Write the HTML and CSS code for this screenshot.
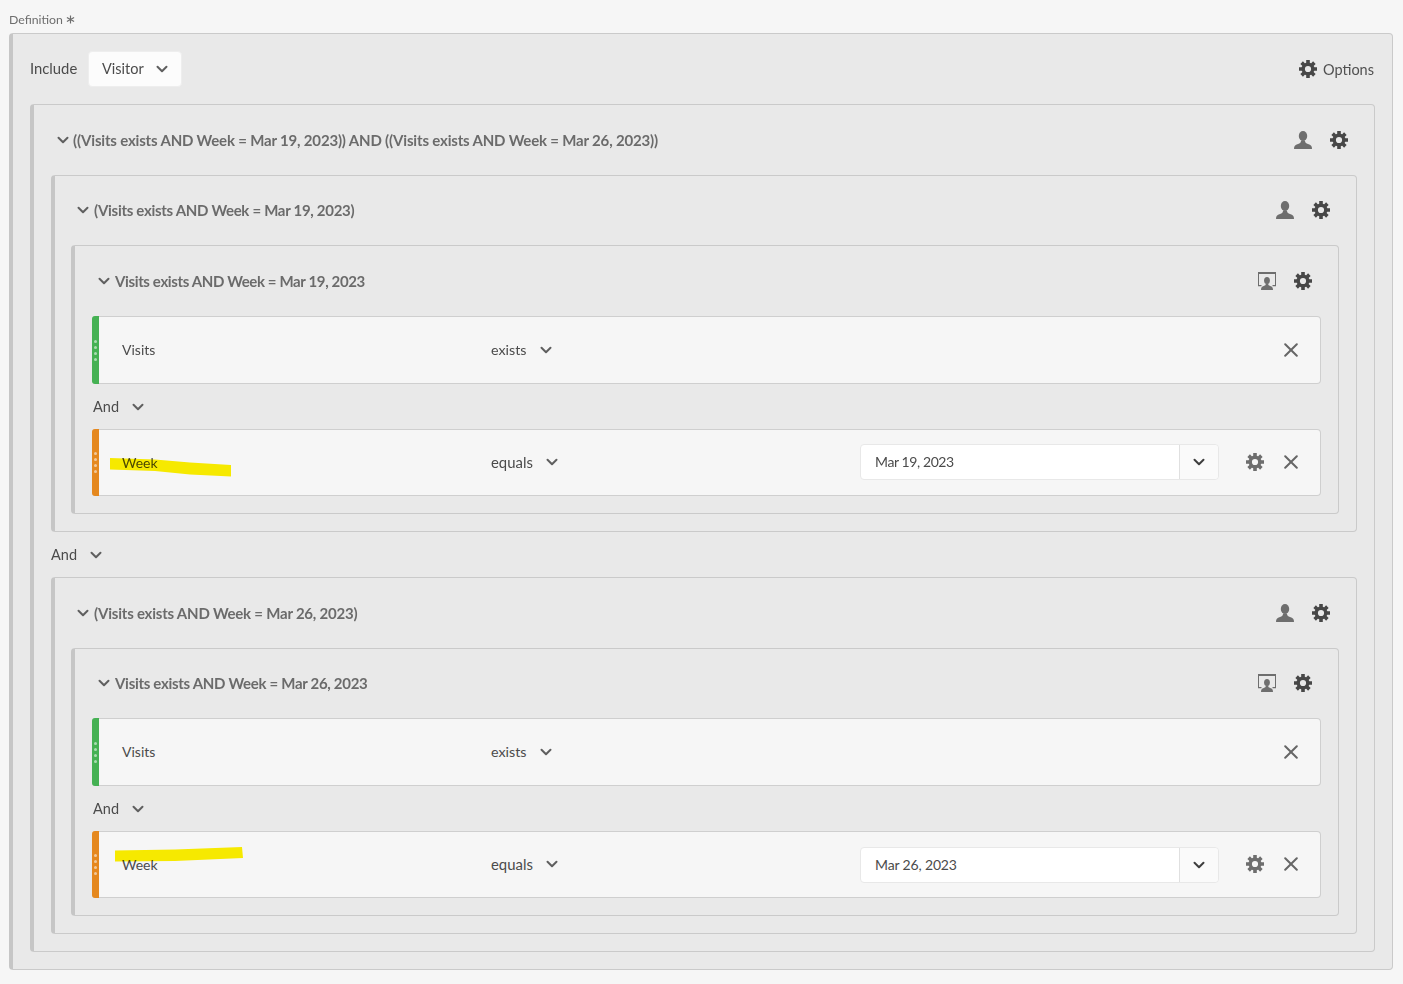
FILE: index.html
```html
<!DOCTYPE html>
<html lang="en">
<head>
<meta charset="utf-8">
<title>Definition</title>
<link rel="stylesheet" href="styles.css">
</head>
<body>
<svg class="defs" width="0" height="0" aria-hidden="true">
  <symbol id="gear" viewBox="0 0 18 18">
    <circle cx="9" cy="9" r="4.800" fill="none" stroke="currentColor" stroke-width="3.400"/>
    <g fill="currentColor">
      <path d="M7.200 0h3.600v4H7.200zM7.200 14h3.600v4H7.200z"/>
      <path d="M7.200 0h3.600v4H7.200zM7.200 14h3.600v4H7.200z" transform="rotate(45 9 9)"/>
      <path d="M7.200 0h3.600v4H7.200zM7.200 14h3.600v4H7.200z" transform="rotate(90 9 9)"/>
      <path d="M7.200 0h3.600v4H7.200zM7.200 14h3.600v4H7.200z" transform="rotate(135 9 9)"/>
    </g>
  </symbol>
  <symbol id="person" viewBox="0 0 18 18">
    <ellipse cx="9" cy="5" rx="4.200" ry="5"/>
    <path d="M0 18c0-3 1-4 4-5 2-.7 3-1.300 3-3.500h4c0 2.200 1 2.800 3 3.500 3 1 4 2 4 5z"/>
  </symbol>
  <symbol id="screen" viewBox="0 0 18 18">
    <path d="M0 0h18v2H0zM0 2h1v11h2.500v1.200H0zM17 2h1v12.200h-3.500V13H17z"/>
    <ellipse cx="9" cy="8.500" rx="2.900" ry="3.600"/>
    <path d="M3 18c0-2.500.8-3.200 2.800-4 1.400-.5 2-1 2-2.500h2.400c0 1.500.6 2 2 2.500 2 .8 2.800 1.500 2.800 4z"/>
  </symbol>
  <symbol id="chev" viewBox="0 0 12 8">
    <path d="M1.500 1.700 6 6.200l4.500-4.500" fill="none" stroke="currentColor" stroke-width="2" stroke-linecap="round" stroke-linejoin="round"/>
  </symbol>
  <symbol id="cross" viewBox="0 0 14 14">
    <path d="M1.200 1.200l11.600 11.600M12.800 1.200 1.200 12.800" fill="none" stroke="currentColor" stroke-width="2" stroke-linecap="round"/>
  </symbol>
  <symbol id="star" viewBox="0 0 10 10">
    <path d="M5 .5v9M1 2.700l8 4.600M9 2.700 1 7.300" fill="none" stroke="currentColor" stroke-width="1.300"/>
  </symbol>
</svg>

<main class="page">
  <div class="field-label">Definition <svg class="star"><use href="#star"/></svg></div>
  <section class="box box-outer">
    <header class="top-row">
      <span class="include">Include</span>
      <button class="picker"><span class="picker-text">Visitor</span><svg class="chev chev-sm"><use href="#chev"/></svg></button>
      <span class="options"><svg class="gear gear-dark"><use href="#gear"/></svg>Options</span>
    </header>

    <section class="box box-l1">
      <header class="head">
        <svg class="chev head-chev"><use href="#chev"/></svg>
        <span class="title">((Visits exists AND Week = Mar 19, 2023)) AND ((Visits exists AND Week = Mar 26, 2023))</span>
        <span class="tools"><svg class="ico-person"><use href="#person"/></svg><svg class="gear gear-dark"><use href="#gear"/></svg></span>
      </header>

      <section class="box box-l2">
        <header class="head head-short">
          <svg class="chev head-chev"><use href="#chev"/></svg>
          <span class="title">(Visits exists AND Week = Mar 19, 2023)</span>
          <span class="tools"><svg class="ico-person"><use href="#person"/></svg><svg class="gear gear-dark"><use href="#gear"/></svg></span>
        </header>
        <section class="box box-l3">
          <header class="head">
            <svg class="chev head-chev"><use href="#chev"/></svg>
            <span class="title">Visits exists AND Week = Mar 19, 2023</span>
            <span class="tools"><svg class="ico-person"><use href="#screen"/></svg><svg class="gear gear-dark"><use href="#gear"/></svg></span>
          </header>
          <div class="rule rule-green">
            <span class="grip"><i></i><i></i><i></i><i></i></span>
            <span class="rule-name">Visits</span>
            <span class="rule-op">exists<svg class="chev chev-sm"><use href="#chev"/></svg></span>
            <span class="rule-end"><svg class="cross"><use href="#cross"/></svg></span>
          </div>
          <div class="andor andor-inner">And<svg class="chev chev-sm"><use href="#chev"/></svg></div>
          <div class="rule rule-orange">
            <span class="grip"><i></i><i></i><i></i><i></i></span>
            <span class="rule-name">Week</span>
            <span class="rule-op">equals<svg class="chev chev-sm"><use href="#chev"/></svg></span>
            <span class="combo"><span class="combo-val">Mar 19, 2023</span><span class="combo-btn"><svg class="chev chev-sm chev-dark"><use href="#chev"/></svg></span></span>
            <span class="rule-end"><svg class="gear gear-mid"><use href="#gear"/></svg><svg class="cross"><use href="#cross"/></svg></span>
            <svg class="mark mark-a" viewBox="0 0 122 19"><path d="M0 0 45 1.500 80 4.500 121 7 121 18.500 80 16.500 45 13 0 11.500z"/></svg>
          </div>
        </section>
      </section>

      <div class="andor andor-outer">And<svg class="chev chev-sm"><use href="#chev"/></svg></div>

      <section class="box box-l2">
        <header class="head">
          <svg class="chev head-chev"><use href="#chev"/></svg>
          <span class="title title-wide">(Visits exists AND Week = Mar 26, 2023)</span>
          <span class="tools"><svg class="ico-person"><use href="#person"/></svg><svg class="gear gear-dark"><use href="#gear"/></svg></span>
        </header>
        <section class="box box-l3">
          <header class="head head-short">
            <svg class="chev head-chev"><use href="#chev"/></svg>
            <span class="title title-wide">Visits exists AND Week = Mar 26, 2023</span>
            <span class="tools"><svg class="ico-person"><use href="#screen"/></svg><svg class="gear gear-dark"><use href="#gear"/></svg></span>
          </header>
          <div class="rule rule-green">
            <span class="grip"><i></i><i></i><i></i><i></i></span>
            <span class="rule-name">Visits</span>
            <span class="rule-op">exists<svg class="chev chev-sm"><use href="#chev"/></svg></span>
            <span class="rule-end"><svg class="cross"><use href="#cross"/></svg></span>
          </div>
          <div class="andor andor-inner">And<svg class="chev chev-sm"><use href="#chev"/></svg></div>
          <div class="rule rule-orange">
            <span class="grip"><i></i><i></i><i></i><i></i></span>
            <span class="rule-name">Week</span>
            <span class="rule-op">equals<svg class="chev chev-sm"><use href="#chev"/></svg></span>
            <span class="combo combo-low"><span class="combo-val">Mar 26, 2023</span><span class="combo-btn"><svg class="chev chev-sm chev-dark"><use href="#chev"/></svg></span></span>
            <span class="rule-end"><svg class="gear gear-mid"><use href="#gear"/></svg><svg class="cross"><use href="#cross"/></svg></span>
            <svg class="mark mark-b" viewBox="0 0 128 15"><path d="M0 3.500 60 2.500 127 0 128 11 60 14 0 14.500z"/></svg>
          </div>
        </section>
      </section>
    </section>
  </section>
</main>
</body>
</html>
```
FILE: styles.css
```css
* { box-sizing: border-box; }
html, body { margin: 0; padding: 0; }
body {
  width: 1403px;
  height: 984px;
  overflow: hidden;
  background: #f6f6f6;
  color: #4b4b4b;
  font-family: "Lato", "Liberation Sans", sans-serif;
  font-size: 15px;
}
.defs { position: absolute; }
.page { padding: 12px 10px 0 9px; }
.field-label {
  display: flex;
  align-items: center;
  gap: 3px;
  height: 21px;
  padding-bottom: 6px;
  font-size: 12.300px;
  line-height: 15px;
  color: #6e6e6e;
}
.star { width: 9px; height: 9px; color: #6e6e6e; }

.box {
  background: #e9e9e9;
  border: 1px solid #cacaca;
  border-left: 4px solid #c6c6c6;
  border-radius: 4px;
}
.box-outer { height: 937px; padding: 0 17px 17px 17px; }
.top-row { display: flex; align-items: center; height: 70px; }
.include { width: 58px; margin-bottom: 2px; color: #4b4b4b; font-size: 14.800px; }
.picker {
  display: flex;
  align-items: center;
  justify-content: space-between;
  width: 94px;
  height: 36px;
  padding: 0 13px;
  background: #fcfcfc;
  border: 1px solid #eeeeee;
  border-radius: 4px;
  color: #4b4b4b;
  font: inherit;
  font-size: 14.500px;
}
.picker-text { margin-bottom: 2px; }
.options {
  margin-left: auto;
  padding-right: 1px;
  display: flex;
  align-items: center;
  gap: 6px;
  font-size: 14.500px;
  color: #505050;
}

.box-l1 { padding: 0 17px 17px 17px; }
.box-l2 { padding: 0 17px 17px 16px; }
.box-l3 { padding: 0 17px 17px 17px; }
.head { display: flex; align-items: center; height: 70px; padding-left: 6px; }
.head-short { height: 69px; padding-bottom: 1px; }
.title { margin-left: 4px; font-size: 15px; font-weight: 700; color: #6b6b6b; letter-spacing: -.18px; }
.box-l2 > .head .title { margin-left: 5px; letter-spacing: -.3px; }
.box-l2 > .head .title-wide { letter-spacing: -.22px; }
.box-l3 > .head .title { margin-left: 5px; letter-spacing: -.37px; }
.box-l3 > .head .title-wide { letter-spacing: -.3px; }
.tools { margin-left: auto; display: flex; align-items: center; gap: 18px; padding-right: 9px; }

.chev { width: 12px; height: 8px; color: #5f5f5f; flex: none; }
.head-chev { width: 12px; height: 8px; }
.chev-dark { color: #3e3e3e; }
.gear { width: 18px; height: 18px; flex: none; }
.gear-dark { color: #474747; }
.gear-mid { color: #6e6e6e; }
.ico-person { width: 18px; height: 18px; fill: #6e6e6e; flex: none; }
.cross { width: 14px; height: 14px; color: #666666; flex: none; }

.rule {
  position: relative;
  display: flex;
  align-items: center;
  height: 68px;
  padding-bottom: 1px;
  background: #f6f6f6;
  border: 1px solid #cfcfcf;
  border-left: 0;
  border-radius: 4px;
  color: #4b4b4b;
}
.rule-orange { height: 67px; }
.grip {
  align-self: stretch;
  display: flex;
  flex-direction: column;
  align-items: center;
  justify-content: center;
  gap: 3px;
  width: 7px;
  margin: -1px 0 -2px;
  border-radius: 3px 0 0 3px;
}
.grip i { width: 3px; height: 3px; border-radius: 50%; background: rgba(255, 255, 255, .55); }
.rule-green .grip { background: #45b153; }
.rule-orange .grip { background: #e5881e; }
.rule-name { margin-left: 23px; width: 369px; flex: none; font-size: 14px; }
.rule-op { display: flex; align-items: center; gap: 13px; font-size: 14.300px; }
.rule-orange .rule-op { font-size: 14.900px; }
.rule-end { margin-left: auto; display: flex; align-items: center; gap: 20px; padding-right: 22px; }
.combo {
  position: absolute;
  left: 768px;
  top: 14px;
  display: flex;
  width: 359px;
  height: 36px;
  background: #ffffff;
  border: 1px solid #e8e8e8;
  border-radius: 4px;
}
.combo-low { top: 15px; }
.combo-val { flex: 1; padding-left: 14px; line-height: 33px; font-size: 14px; letter-spacing: -.4px; }
.combo-low .combo-val { letter-spacing: -.15px; }
.combo-btn {
  width: 39px;
  display: flex;
  align-items: center;
  justify-content: center;
  background: #fafafa;
  border-left: 1px solid #e0e0e0;
  border-radius: 0 4px 4px 0;
}
.andor { display: flex; align-items: center; gap: 13px; height: 45px; font-size: 14.500px; color: #4b4b4b; }
.andor-inner { padding-left: 1px; }

.mark { position: absolute; fill: #fff200; mix-blend-mode: multiply; }
.mark-a { left: 18px; top: 28px; width: 122px; height: 19px; }
.mark-b { left: 23px; top: 15px; width: 128px; height: 15px; }
```
